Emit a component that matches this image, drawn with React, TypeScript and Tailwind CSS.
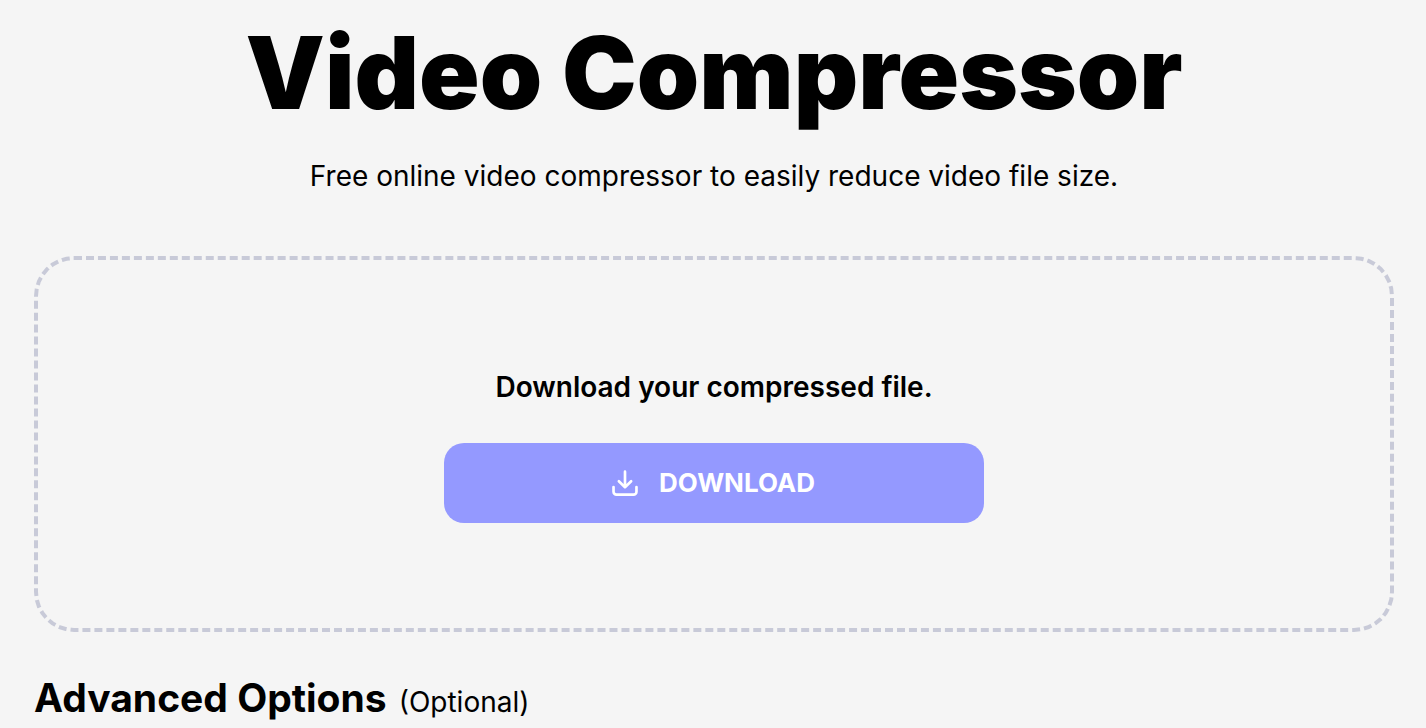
function DownloadIcon() {
  return (
    <svg
      className="size-8 shrink-0"
      viewBox="0 0 24 24"
      fill="none"
      stroke="currentColor"
      strokeWidth={2}
      strokeLinecap="round"
      strokeLinejoin="round"
      aria-hidden="true"
    >
      <path d="M12 3.5v11.7m0 0l-4.6-4.5M12 15.2l4.6-4.5" />
      <path d="M3.4 15v3.5a2.2 2.2 0 0 0 2.2 2.2h12.8a2.2 2.2 0 0 0 2.2-2.2V15" />
    </svg>
  );
}

export default function App() {
  return (
    <main className="min-h-screen bg-[#f5f5f5] pr-8 pl-[34px] font-[Inter,sans-serif] text-black">
      <header className="flex flex-col items-center pt-[23px] text-center">
        <h1 className="text-[100px] leading-[100px] font-black">
          Video Compressor
        </h1>
        <p className="mt-[33px] text-[28px] leading-10">
          Free online video compressor to easily reduce video file size.
        </p>
      </header>

      <section className="mt-[60px] flex h-[376px] flex-col items-center justify-center rounded-[40px] border-4 border-dashed border-[#c8cad8] pt-0.5">
        <p className="text-[28px] leading-10 font-semibold">
          Download your compressed file.
        </p>
        <button
          type="button"
          className="mt-9 flex h-20 w-full max-w-[540px] items-center justify-center gap-[18px] rounded-[20px] bg-[#9499ff] pr-1 pl-0 text-[26px] leading-10 font-bold text-white"
        >
          <DownloadIcon />
          DOWNLOAD
        </button>
      </section>

      <h2 className="mt-10 flex items-baseline gap-3 text-[39px] leading-[52px] font-bold">
        Advanced Options
        <span className="text-[28px] font-normal">(Optional)</span>
      </h2>
    </main>
  );
}
